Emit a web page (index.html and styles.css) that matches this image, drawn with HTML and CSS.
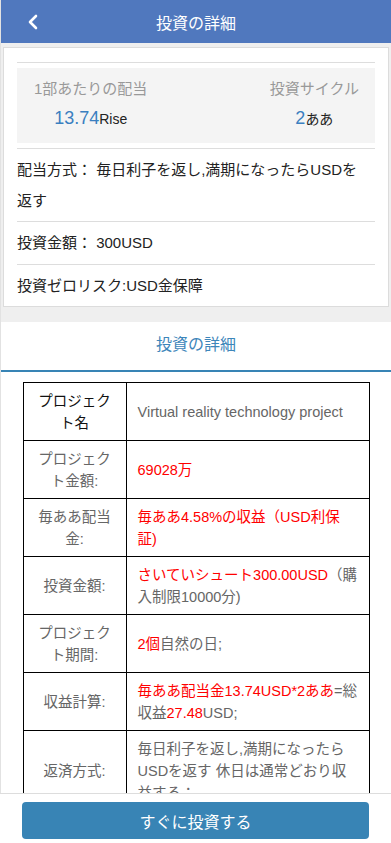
FILE: index.html
```html
<!DOCTYPE html>
<html lang="ja">
<head>
  <meta charset="UTF-8" />
  <meta name="viewport" content="width=device-width, initial-scale=1.0" />
  <title>投資の詳細</title>
  <link rel="stylesheet" href="styles.css">
</head>
<body>
  <div class="page">
    <header class="topbar">
      <a class="back" href="#">
        <svg width="12" height="16" viewBox="0 0 12 16"><path d="M9 2 L3 8 L9 14" fill="none" stroke="#fff" stroke-width="2.6" stroke-linecap="round" stroke-linejoin="round"/></svg>
      </a>
      <h1>投資の詳細</h1>
    </header>

    <div class="card">
      <div class="stats-wrap">
        <div class="stats">
          <div class="stat">
            <div class="stat-label">1部あたりの配当</div>
            <div class="stat-value"><span class="num">13.74</span>Rise</div>
          </div>
          <div class="stat">
            <div class="stat-label">投資サイクル</div>
            <div class="stat-value"><span class="num">2</span>ああ</div>
          </div>
        </div>
      </div>
      <div class="info-row">配当方式： 毎日利子を返し,満期になったらUSDを返す</div>
      <div class="info-row">投資金額： 300USD</div>
      <div class="info-row">投資ゼロリスク:USD金保障</div>
    </div>

    <section class="detail">
      <h2 class="detail-title">投資の詳細</h2>
      <table class="detail-table">
        <tr>
          <th>プロジェクト名</th>
          <td>Virtual reality technology project</td>
        </tr>
        <tr>
          <th class="muted">プロジェクト金額:</th>
          <td><span class="red">69028万</span></td>
        </tr>
        <tr>
          <th class="muted">毎ああ配当金:</th>
          <td><span class="red">毎ああ4.58%の収益（USD利保証)</span></td>
        </tr>
        <tr>
          <th class="muted">投資金額:</th>
          <td><span class="red">さいていシュート300.00USD</span>（購入制限10000分)</td>
        </tr>
        <tr>
          <th class="muted">プロジェクト期間:</th>
          <td><span class="red">2個</span>自然の日;</td>
        </tr>
        <tr>
          <th class="muted">収益計算:</th>
          <td><span class="red">毎ああ配当金13.74USD*2ああ</span>=総収益<span class="red">27.48</span>USD;</td>
        </tr>
        <tr>
          <th class="muted">返済方式:</th>
          <td>毎日利子を返し,満期になったらUSDを返す 休日は通常どおり収益する；</td>
        </tr>
      </table>
    </section>

    <div class="footer">
      <button class="invest-btn">すぐに投資する</button>
    </div>
  </div>
</body>
</html>
```

FILE: styles.css
```css
body {
  margin: 0;
  background-color: #efefef;
  font-family: "Liberation Sans", "Noto Sans CJK JP", sans-serif;
  color: #333;
}
.page {
  border-left: 1px solid #e2e2e2;
  min-height: 100vh;
  padding-bottom: 60px;
}
.topbar {
  height: 43px;
  background-color: #5078be;
  display: flex;
  align-items: center;
  justify-content: center;
  position: relative;
}
.topbar h1 {
  margin: 0;
  color: #fff;
  font-size: 16px;
  font-weight: normal;
}
.back {
  position: absolute;
  left: 26px;
  top: 14px;
  display: flex;
}
.card {
  margin: 4px 2px 0 2px;
  background-color: #fff;
  border: 1px solid #dcdcdc;
  padding: 14px 13px 0 13px;
}
.stats-wrap {
  border-top: 1px solid #ddd;
  padding: 5px 0;
}
.stats {
  background-color: #f4f4f4;
  display: flex;
  justify-content: space-between;
  padding: 10px 16px 6px 17px;
}
.stat {
  text-align: center;
}
.stat-label {
  color: #999;
  font-size: 15px;
  line-height: 22px;
}
.stat-value {
  color: #222;
  font-size: 14px;
  line-height: 36px;
}
.num {
  color: #3a7fc0;
  font-size: 18px;
}
.info-row {
  border-top: 1px solid #ddd;
  font-size: 15px;
  line-height: 30.5px;
  padding: 6px 10px 5px 0;
  color: #222;
}
.detail {
  margin-top: 15px;
  background-color: #fff;
  padding-bottom: 20px;
}
.detail-title {
  margin: 0;
  height: 48px;
  line-height: 46px;
  text-align: center;
  font-size: 16px;
  font-weight: normal;
  color: #3d86ba;
  border-bottom: 2px solid #3884b5;
}
.detail-table {
  width: 347px;
  margin: 10px auto 0 auto;
  border-collapse: collapse;
  font-size: 14.5px;
  line-height: 22px;
}
.detail-table th,
.detail-table td {
  border: 1px solid #000;
  padding: 6.5px 11px;
  vertical-align: middle;
}
.detail-table th {
  width: 80px;
  font-weight: normal;
  text-align: center;
  color: #111;
}
.detail-table th.muted {
  color: #666;
}
.detail-table td {
  color: #666;
  text-align: left;
  padding-right: 10px;
}
.red {
  color: #ff0000;
}
.footer {
  position: fixed;
  left: 0;
  right: 0;
  bottom: 0;
  height: 50px;
  background-color: #fff;
  border-top: 1px solid #ddd;
  display: flex;
  justify-content: center;
  padding-top: 8px;
  box-sizing: border-box;
}
.invest-btn {
  width: 347px;
  height: 37px;
  border: none;
  border-radius: 4px;
  background-color: #3884b5;
  color: #fff;
  font-size: 16px;
  font-family: "Liberation Sans", "Noto Sans CJK JP", sans-serif;
}
```
